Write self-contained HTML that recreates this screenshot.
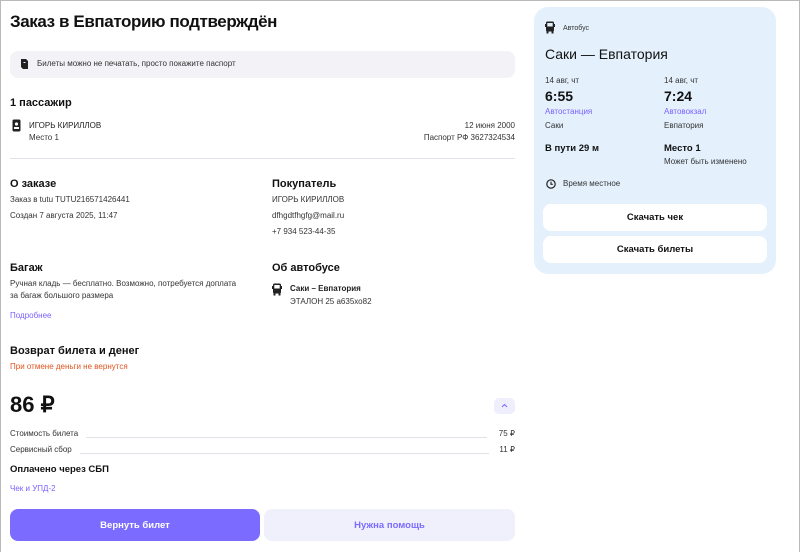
<!DOCTYPE html>
<html><head><meta charset="utf-8"><style>
*{margin:0;padding:0;box-sizing:border-box}
body{width:800px;height:552px;position:relative;background:#fff;font-family:"Liberation Sans",sans-serif;color:#1a1a1a;overflow:hidden}
.frame{position:absolute;left:0;top:0;width:800px;height:552px;border:1px solid #b9b9b9;border-bottom:none}
.t{position:absolute;white-space:nowrap;line-height:14px;height:14px}
.s{font-size:8.5px;color:#333}
.h{font-size:11px;font-weight:bold;color:#111}
.r{text-align:right}
.line{position:absolute;height:1px;background:#e2e2ea}
.btn{position:absolute;border-radius:8px;display:flex;align-items:center;justify-content:center;font-size:9.5px;font-weight:bold}
</style></head><body>
<div class="frame"></div>

<div class="t" style="left:10px;top:11px;font-size:17px;line-height:22px;height:22px;font-weight:bold;color:#111;letter-spacing:-0.4px">Заказ в Евпаторию подтверждён</div>

<div style="position:absolute;left:10px;top:51px;width:505px;height:27px;background:#f3f3f7;border-radius:8px"></div>
<svg style="position:absolute;left:20px;top:58px" width="9" height="12" viewBox="0 0 9 12"><path d="M1 1h5l2 2v8H3L1 9z" fill="#222"/><rect x="3.5" y="4" width="2" height="1" fill="#f3f3f7"/></svg>
<div class="t s" style="left:37px;top:57px;font-size:8px">Билеты можно не печатать, просто покажите паспорт</div>

<div class="t h" style="left:10px;top:96px">1 пассажир</div>
<svg style="position:absolute;left:12px;top:119px" width="9" height="13" viewBox="0 0 9 13"><rect x="0.5" y="0.5" width="8" height="12" rx="1.5" fill="#222"/><circle cx="4.5" cy="5" r="1.6" fill="#fff"/><rect x="2" y="8" width="5" height="2" fill="#fff"/></svg>
<div class="t s" style="left:29px;top:119px;font-size:8px;color:#222">ИГОРЬ КИРИЛЛОВ</div>
<div class="t s" style="left:29px;top:131px;font-size:8px">Место 1</div>
<div class="t s r" style="right:285px;top:119px;font-size:8px">12 июня 2000</div>
<div class="t s r" style="right:285px;top:131px;font-size:8px">Паспорт РФ 3627324534</div>
<div class="line" style="left:10px;top:158px;width:505px"></div>

<div class="t h" style="left:10px;top:177px">О заказе</div>
<div class="t s" style="left:10px;top:193px;font-size:8px">Заказ в tutu TUTU216571426441</div>
<div class="t s" style="left:10px;top:209px;font-size:8px">Создан 7 августа 2025, 11:47</div>

<div class="t h" style="left:272px;top:177px">Покупатель</div>
<div class="t s" style="left:272px;top:193px;font-size:8px">ИГОРЬ КИРИЛЛОВ</div>
<div class="t s" style="left:272px;top:209px;font-size:8px">dfhgdtfhgfg@mail.ru</div>
<div class="t s" style="left:272px;top:225px;font-size:8px">+7 934 523-44-35</div>

<div class="t h" style="left:10px;top:261px">Багаж</div>
<div class="t s" style="left:10px;top:277px;font-size:8px">Ручная кладь — бесплатно. Возможно, потребуется доплата</div>
<div class="t s" style="left:10px;top:289px;font-size:8px">за багаж большого размера</div>
<div class="t s" style="left:10px;top:309px;font-size:8px;color:#7b61ff">Подробнее</div>

<div class="t h" style="left:272px;top:261px">Об автобусе</div>
<svg style="position:absolute;left:272px;top:283px" width="10" height="13" viewBox="0 0 10 13"><rect x="1" y="0.5" width="8" height="10" rx="1.5" fill="#222"/><rect x="2.3" y="2" width="5.4" height="3.5" fill="#fff"/><rect x="0" y="3" width="1" height="3" fill="#222"/><rect x="9" y="3" width="1" height="3" fill="#222"/><rect x="1.5" y="10" width="2" height="2.5" fill="#222"/><rect x="6.5" y="10" width="2" height="2.5" fill="#222"/></svg>
<div class="t s" style="left:290px;top:282px;font-size:8px;font-weight:bold;color:#222">Саки – Евпатория</div>
<div class="t s" style="left:290px;top:295px;font-size:8px">ЭТАЛОН 25 а635хо82</div>

<div class="t h" style="left:10px;top:344px">Возврат билета и денег</div>
<div class="t s" style="left:10px;top:360px;font-size:8px;color:#e0541e">При отмене деньги не вернутся</div>

<div class="t" style="left:10px;top:392px;font-size:22px;line-height:26px;height:26px;font-weight:bold;color:#111">86 ₽</div>
<div style="position:absolute;left:494px;top:398px;width:21px;height:16px;border-radius:5px;background:#eeeefc"></div>
<svg style="position:absolute;left:501px;top:403px" width="7" height="5" viewBox="0 0 7 5"><path d="M1 4 3.5 1.5 6 4" stroke="#7b6cff" stroke-width="1.1" fill="none"/></svg>

<div class="t s" style="left:10px;top:427px;font-size:8px">Стоимость билета</div>
<div class="line" style="left:86px;top:437px;width:401px"></div>
<div class="t s r" style="right:285px;top:427px;font-size:8px">75 ₽</div>
<div class="t s" style="left:10px;top:443px;font-size:8px">Сервисный сбор</div>
<div class="line" style="left:80px;top:453px;width:409px"></div>
<div class="t s r" style="right:285px;top:443px;font-size:8px">11 ₽</div>

<div class="t" style="left:10px;top:463px;font-size:9.5px;font-weight:bold;color:#111">Оплачено через СБП</div>
<div class="t s" style="left:10px;top:482px;font-size:8px;color:#7b61ff">Чек и УПД-2</div>

<div class="btn" style="left:10px;top:509px;width:250px;height:32px;background:#7b6cff;color:#fff">Вернуть билет</div>
<div class="btn" style="left:264px;top:509px;width:251px;height:32px;background:#f0f0fd;color:#7b6cff">Нужна помощь</div>

<div style="position:absolute;left:534px;top:7px;width:242px;height:267px;background:#e4f1fd;border-radius:14px"></div>
<svg style="position:absolute;left:545px;top:21px" width="10" height="13" viewBox="0 0 10 13"><rect x="1" y="0.5" width="8" height="10" rx="1.5" fill="#222"/><rect x="2.3" y="2" width="5.4" height="3.5" fill="#e4f1fd"/><rect x="0" y="3" width="1" height="3" fill="#222"/><rect x="9" y="3" width="1" height="3" fill="#222"/><rect x="1.5" y="10" width="2" height="2.5" fill="#222"/><rect x="6.5" y="10" width="2" height="2.5" fill="#222"/></svg>
<div class="t s" style="left:563px;top:22px;font-size:7px">Автобус</div>
<div class="t" style="left:545px;top:45px;font-size:14px;line-height:18px;height:18px;color:#111">Саки — Евпатория</div>
<div class="t s" style="left:545px;top:74px;font-size:8px">14 авг, чт</div>
<div class="t s" style="left:664px;top:74px;font-size:8px">14 авг, чт</div>
<div class="t" style="left:545px;top:88px;font-size:14px;line-height:16px;height:16px;font-weight:bold;color:#111">6:55</div>
<div class="t" style="left:664px;top:88px;font-size:14px;line-height:16px;height:16px;font-weight:bold;color:#111">7:24</div>
<div class="t s" style="left:545px;top:105px;font-size:8px;color:#7b61ff">Автостанция</div>
<div class="t s" style="left:664px;top:105px;font-size:8px;color:#7b61ff">Автовокзал</div>
<div class="t s" style="left:545px;top:119px;font-size:8px">Саки</div>
<div class="t s" style="left:664px;top:119px;font-size:8px">Евпатория</div>
<div class="t" style="left:545px;top:142px;font-size:9.5px;font-weight:bold;color:#111">В пути 29 м</div>
<div class="t" style="left:664px;top:142px;font-size:9.5px;font-weight:bold;color:#111">Место 1</div>
<div class="t s" style="left:664px;top:155px;font-size:8px">Может быть изменено</div>
<svg style="position:absolute;left:546px;top:179px" width="10" height="10" viewBox="0 0 10 10"><circle cx="5" cy="5" r="4.2" stroke="#222" stroke-width="1.2" fill="none"/><path d="M5 2.6V5.3H6.8" stroke="#222" stroke-width="1.1" fill="none"/></svg>
<div class="t s" style="left:563px;top:177px;font-size:8px">Время местное</div>
<div class="btn" style="left:543px;top:204px;width:224px;height:27px;background:#fff;color:#111">Скачать чек</div>
<div class="btn" style="left:543px;top:236px;width:224px;height:27px;background:#fff;color:#111">Скачать билеты</div>
</body></html>
